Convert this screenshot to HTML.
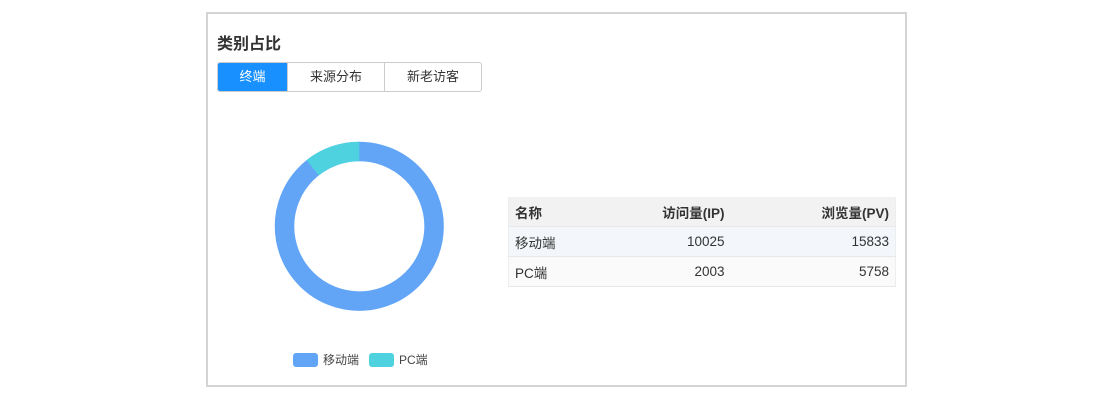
<!DOCTYPE html>
<html><head><meta charset="utf-8"><style>
body{margin:0;width:1115px;height:400px;background:#fff;font-family:"Liberation Sans","Noto Sans CJK SC",sans-serif;position:relative;overflow:hidden}
.card{position:absolute;left:206px;top:12px;width:697px;height:371px;border:2px solid #d4d4d4}
.title{position:absolute;left:217px;top:30px;font-size:16px;font-weight:bold;color:#333}
.tabs{position:absolute;left:217px;top:62px;height:28px;display:flex;border:1px solid #ccc;border-radius:3px;overflow:hidden}
.tabs div{font-size:13px;line-height:28px;text-align:center;color:#333;border-left:1px solid #ccc}
.tabs div:first-child{border-left:none;background:#1890ff;color:#fff}
table{position:absolute;left:508px;top:197px;width:387px;border-collapse:collapse;font-size:13.5px;color:#333;table-layout:fixed;border-left:1px solid #eee;border-right:1px solid #eee}
td,th{height:29px;padding:0 6px;border-bottom:1px solid #e8e8e8}
th{background:#f2f2f2;font-weight:bold}
tr.r1 td{background:#f3f7fb}
tr.r2 td{background:#fafafa}
.leg{position:absolute;top:351px;font-size:12px;color:#444;display:flex;align-items:center}
.leg span{display:inline-block;width:25px;height:14px;border-radius:3px;margin-right:5px}
</style></head><body>
<div class="card"></div>
<div class="title">类别占比</div>
<div class="tabs"><div style="width:69px">终端</div><div style="width:96px">来源分布</div><div style="width:96px">新老访客</div></div>
<svg style="position:absolute;left:0;top:0" width="1115" height="400">
<circle cx="359.3" cy="226.3" r="74.8" fill="none" stroke="#62a5f7" stroke-width="19.5"/>
<path d="M359.3 141.7 A84.6 84.6 0 0 0 306.6 160.1 L318.8 175.4 A65 65 0 0 1 359.3 161.3 Z" fill="#4fd2e0"/>
</svg>
<table>
<colgroup><col style="width:100px"><col style="width:122px"><col style="width:165px"></colgroup>
<tr><th style="text-align:left">名称</th><th style="text-align:right">访问量(IP)</th><th style="text-align:right">浏览量(PV)</th></tr>
<tr class="r1"><td>移动端</td><td style="text-align:right">10025</td><td style="text-align:right">15833</td></tr>
<tr class="r2"><td>PC端</td><td style="text-align:right">2003</td><td style="text-align:right">5758</td></tr>
</table>
<div class="leg" style="left:293px"><span style="background:#62a5f7"></span>移动端</div>
<div class="leg" style="left:369px"><span style="background:#4fd2e0"></span>PC端</div>
</body></html>
